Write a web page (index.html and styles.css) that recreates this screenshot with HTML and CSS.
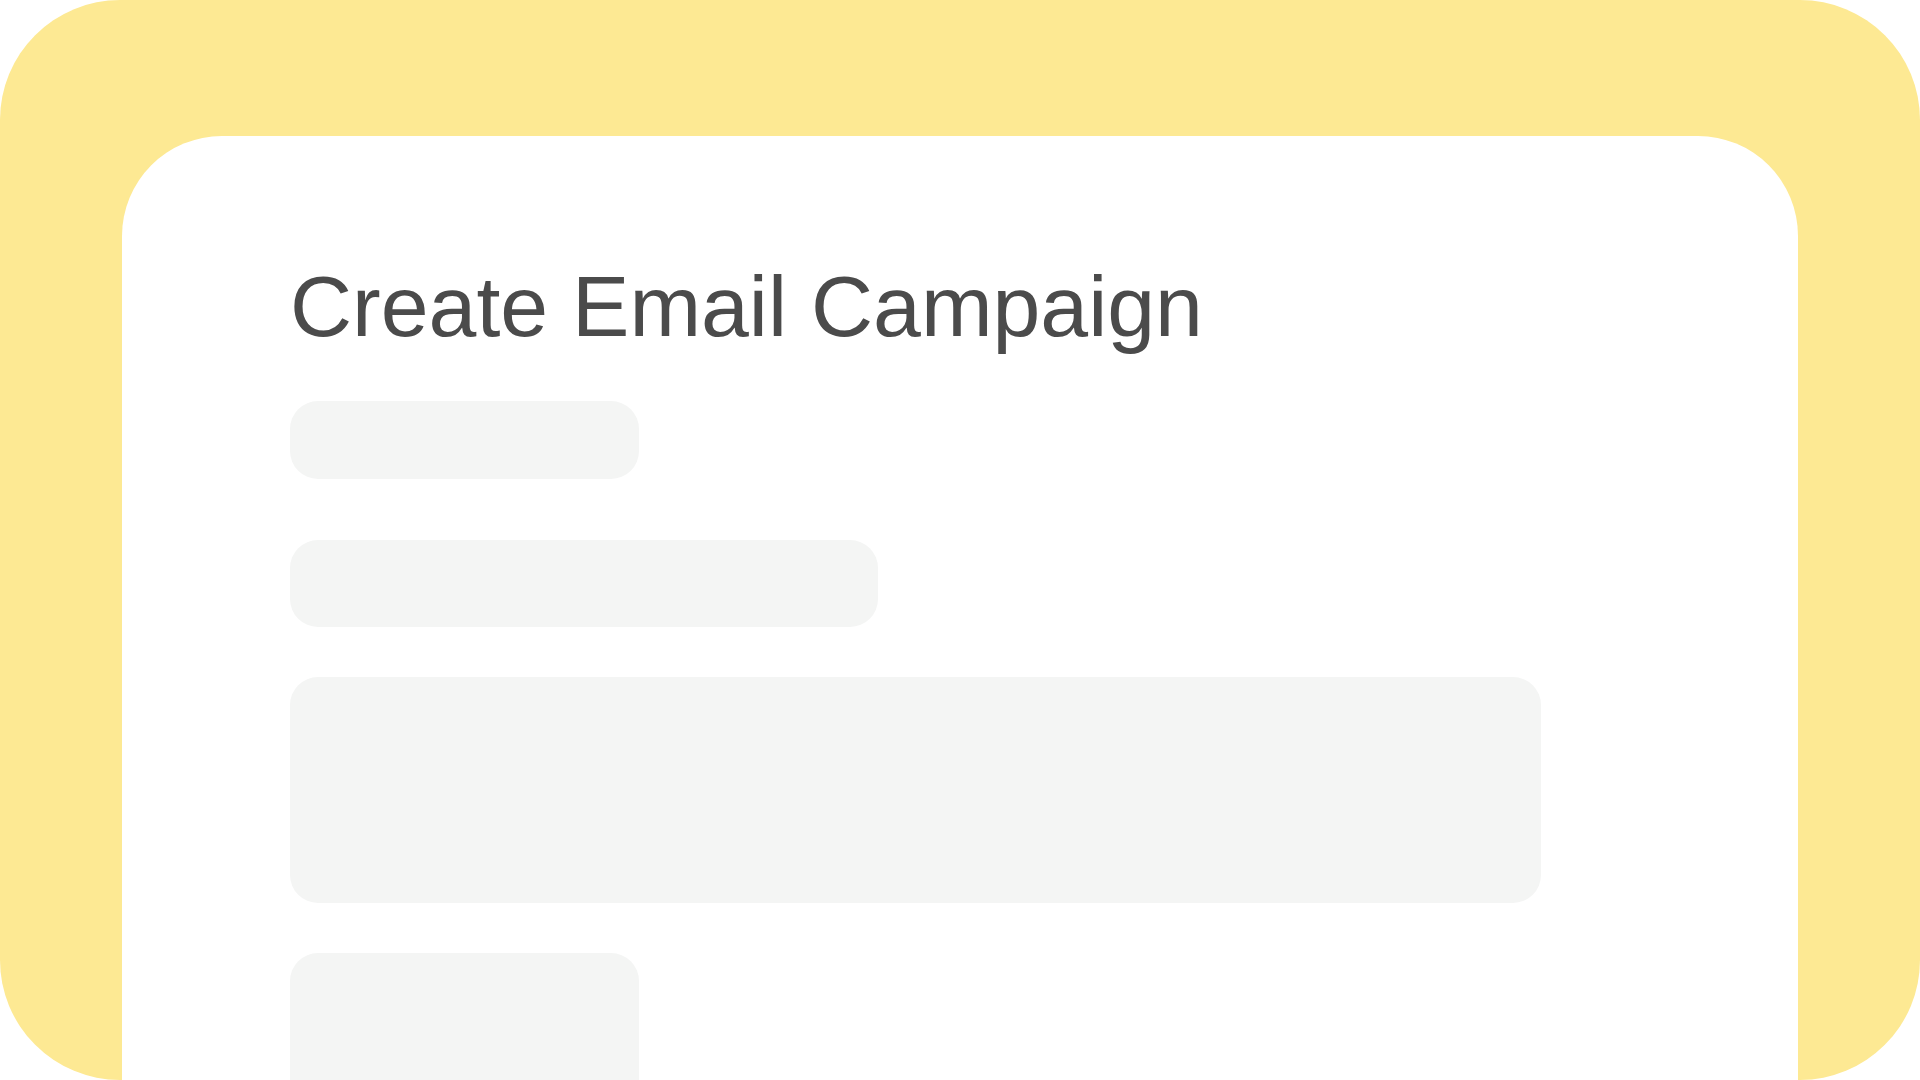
FILE: index.html
```html
<!DOCTYPE html>
<html lang="en">
<head>
<meta charset="utf-8">
<title>Create Email Campaign</title>
<link rel="stylesheet" href="styles.css">
</head>
<body>
<div class="frame">
  <main class="card">
    <h1 class="title">Create Email Campaign</h1>
    <div class="fields">
      <div class="field field-short"></div>
      <div class="field field-medium"></div>
      <div class="field field-large"></div>
      <div class="field field-tail"></div>
    </div>
  </main>
</div>
</body>
</html>
```
FILE: styles.css
```css
html, body {
  margin: 0;
  padding: 0;
  background: #ffffff;
  overflow: hidden;
}

.frame {
  width: 1920px;
  height: 1080px;
  box-sizing: border-box;
  background: #fde993;
  border-radius: 120px;
  padding: 136px 122px 0 122px;
  overflow: hidden;
}

.card {
  background: #ffffff;
  border-radius: 100px 100px 0 0;
  height: 1100px;
  box-sizing: border-box;
  padding: 122px 0 0 168px;
}

.title {
  margin: 0;
  font-family: "Liberation Sans", Arial, sans-serif;
  font-weight: 400;
  font-size: 86px;
  line-height: 96px;
  color: #4b4b4b;
}

.fields {
  display: flex;
  flex-direction: column;
  align-items: flex-start;
  margin-top: 47px;
}

.field {
  background: #f4f5f4;
  border-radius: 28px;
}

.field-short {
  width: 349px;
  height: 78px;
}

.field-medium {
  width: 588px;
  height: 87px;
  margin-top: 61px;
}

.field-large {
  width: 1251px;
  height: 226px;
  margin-top: 50px;
}

.field-tail {
  width: 349px;
  height: 220px;
  margin-top: 50px;
}
```
